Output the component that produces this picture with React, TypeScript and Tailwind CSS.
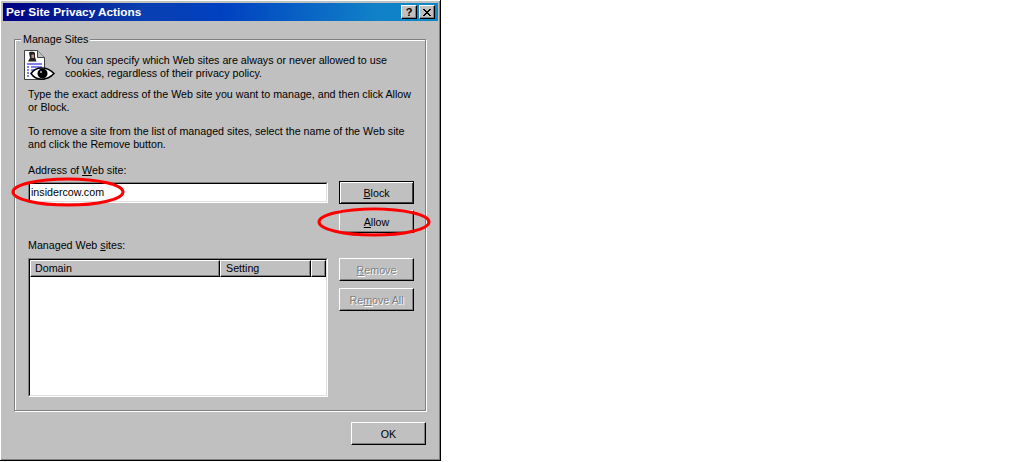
import React from "react";

const font = "font-['Liberation_Sans',Arial,sans-serif]";
const body = "whitespace-nowrap text-[10.7px] leading-[13px] text-black";

function Bevel({ children, className = "", disabled = false, isDefault = false }: { children: React.ReactNode; className?: string; disabled?: boolean; isDefault?: boolean }) {
  const frame = isDefault
    ? "border-black shadow-[inset_1px_1px_0_#fff,inset_-1px_-1px_0_#404040]"
    : "border-t-white border-l-white border-r-black border-b-black shadow-[inset_-1px_-1px_0_#808080]";
  return (
    <div
      className={`flex h-[23px] w-[75px] items-center justify-center border pt-[1px] text-[10.7px] leading-none ${frame} ${disabled ? "text-[#808080] [text-shadow:1px_1px_0_#fff]" : "text-black"} ${className}`}
    >
      {children}
    </div>
  );
}

function DocIcon() {
  return (
    <svg width="32" height="31" viewBox="0 0 32 31" className="shrink-0">
      <path d="M1.5 0.5H14.5L21.5 7.5V29.5H1.5Z" fill="#fff" stroke="#404040" />
      <path d="M14.5 0.5V7.5H21.5" fill="#c0c0c0" stroke="#404040" />
      <path d="M6 2.5C6 1.5 12 1.5 12 3V7L13.5 11.5H5L7 8Z" fill="#202020" />
      <path d="M8.5 4.5H11V8H8.5Z" fill="#c09080" />
      <path d="M4 14H19M4 17H6M8 17H19M4 20H6M8 20H13M4 23H6M4 26H6" stroke="#0000e0" strokeWidth="1" />
      <path d="M8 23.5C13 16 24 16 31 23.5C24 31 13 31 8 23.5Z" fill="#fff" stroke="#000" strokeWidth="1.5" />
      <circle cx="19.5" cy="23.5" r="5" fill="#000" />
      <circle cx="18" cy="22" r="1.2" fill="#909090" />
    </svg>
  );
}

function HeaderCell({ children, className = "" }: { children?: React.ReactNode; className?: string }) {
  return (
    <div className={`flex h-[17px] items-center border border-t-white border-l-white border-r-black border-b-black bg-[#c0c0c0] text-[10.7px] text-black shadow-[inset_-1px_-1px_0_#808080] ${className}`}>
      {children}
    </div>
  );
}

function Sunken({ children, className = "" }: { children?: React.ReactNode; className?: string }) {
  return (
    <div className={`border border-t-[#808080] border-l-[#808080] border-r-white border-b-white ${className}`}>
      <div className="h-full border border-t-black border-l-black border-r-[#dfdfdf] border-b-[#dfdfdf] bg-white">{children}</div>
    </div>
  );
}

export default function App() {
  return (
    <div className={`relative h-[462px] w-[1020px] overflow-hidden bg-white ${font}`}>
      <div className="flex h-[461px] w-[441px] flex-col border-r border-b border-r-black border-b-black bg-[#c0c0c0] pl-[3px] pt-[3px] shadow-[inset_1px_1px_0_#fff,inset_-1px_-1px_0_#808080]">
        <div className="flex h-[18px] w-[435px] shrink-0 items-center justify-between bg-[linear-gradient(90deg,#000080_0%,#0a3fb0_32%,#0040c0_50%,#1080c8_85%,#1088c8_100%)] pl-[3px] pr-[3px]">
          <span className="pt-[1px] text-[11.8px] font-bold text-white">Per Site Privacy Actions</span>
          <div className="flex gap-[2px]">
            <div className="flex h-[14px] w-[16px] items-center justify-center border border-t-white border-l-white border-r-black border-b-black bg-[#c0c0c0] text-[11px] font-bold leading-none text-black shadow-[inset_-1px_-1px_0_#808080]">?</div>
            <div className="flex h-[14px] w-[16px] items-center justify-center border border-t-white border-l-white border-r-black border-b-black bg-[#c0c0c0] shadow-[inset_-1px_-1px_0_#808080]">
              <svg width="8" height="7" viewBox="0 0 8 7"><path d="M0 0H2V1H3V2H5V1H6V0H8V1H7V2H6V3H5V4H6V5H7V6H8V7H6V6H5V5H3V6H2V7H0V6H1V5H2V4H3V3H2V2H1V1H0Z" fill="#000" /></svg>
            </div>
          </div>
        </div>

        <fieldset className="ml-[11px] mt-[12px] h-[378px] w-[411px] shrink-0 border border-[#808080] pl-[13px] pr-[11px] pt-0 shadow-[1px_1px_0_#fff,inset_1px_1px_0_#fff]">
          <legend className="ml-[-7px] bg-[#c0c0c0] px-[2px] text-[10.7px] leading-[13px] text-black">Manage Sites</legend>
          <div className="ml-[-5px] flex items-start gap-[10px] pt-[4px]">
            <DocIcon />
            <p className={`pt-[4px] ${body}`}>
              You can specify which Web sites are always or never allowed to use
              <br />
              cookies, regardless of their privacy policy.
            </p>
          </div>
          <p className={`mt-[7px] ${body}`}>
            Type the exact address of the Web site you want to manage, and then click Allow
            <br />
            or Block.
          </p>
          <p className={`mt-[11px] ${body}`}>
            To remove a site from the list of managed sites, select the name of the Web site
            <br />
            and click the Remove button.
          </p>
          <div className="mt-[13px] flex gap-[11px]">
            <div className="flex w-[300px] flex-col">
              <div className={body}>
                Address of <u>W</u>eb site:
              </div>
              <Sunken className="mt-[5px] h-[21px]">
                <div className={`flex h-full items-center pl-[1px] ${body}`}>insidercow.com</div>
              </Sunken>
              <div className={`mt-[36px] ${body}`}>
                Managed Web <u>s</u>ites:
              </div>
              <Sunken className="mt-[6px] h-[139px]">
                <div className="flex">
                  <HeaderCell className="w-[190px] pl-[4px]">Domain</HeaderCell>
                  <HeaderCell className="w-[91px] pl-[5px]">Setting</HeaderCell>
                  <HeaderCell className="flex-1" />
                </div>
              </Sunken>
            </div>
            <div className="flex flex-col pt-[17px]">
              <Bevel isDefault><span><u>B</u>lock</span></Bevel>
              <Bevel className="mt-[6px]"><span><u>A</u>llow</span></Bevel>
              <Bevel disabled className="mt-[25px]"><span><u>R</u>emove</span></Bevel>
              <Bevel disabled className="mt-[7px]"><span>Re<u>m</u>ove All</span></Bevel>
            </div>
          </div>
        </fieldset>

        <div className="mt-[11px] flex w-[423px] justify-end">
          <Bevel>OK</Bevel>
        </div>
      </div>

      <svg className="pointer-events-none absolute left-0 top-0" width="441" height="240" viewBox="0 0 441 240">
        <ellipse cx="68" cy="192" rx="55" ry="13" fill="none" stroke="#ff0000" strokeWidth="3" />
        <ellipse cx="374" cy="222" rx="55" ry="13" fill="none" stroke="#ff0000" strokeWidth="3" />
      </svg>
    </div>
  );
}
